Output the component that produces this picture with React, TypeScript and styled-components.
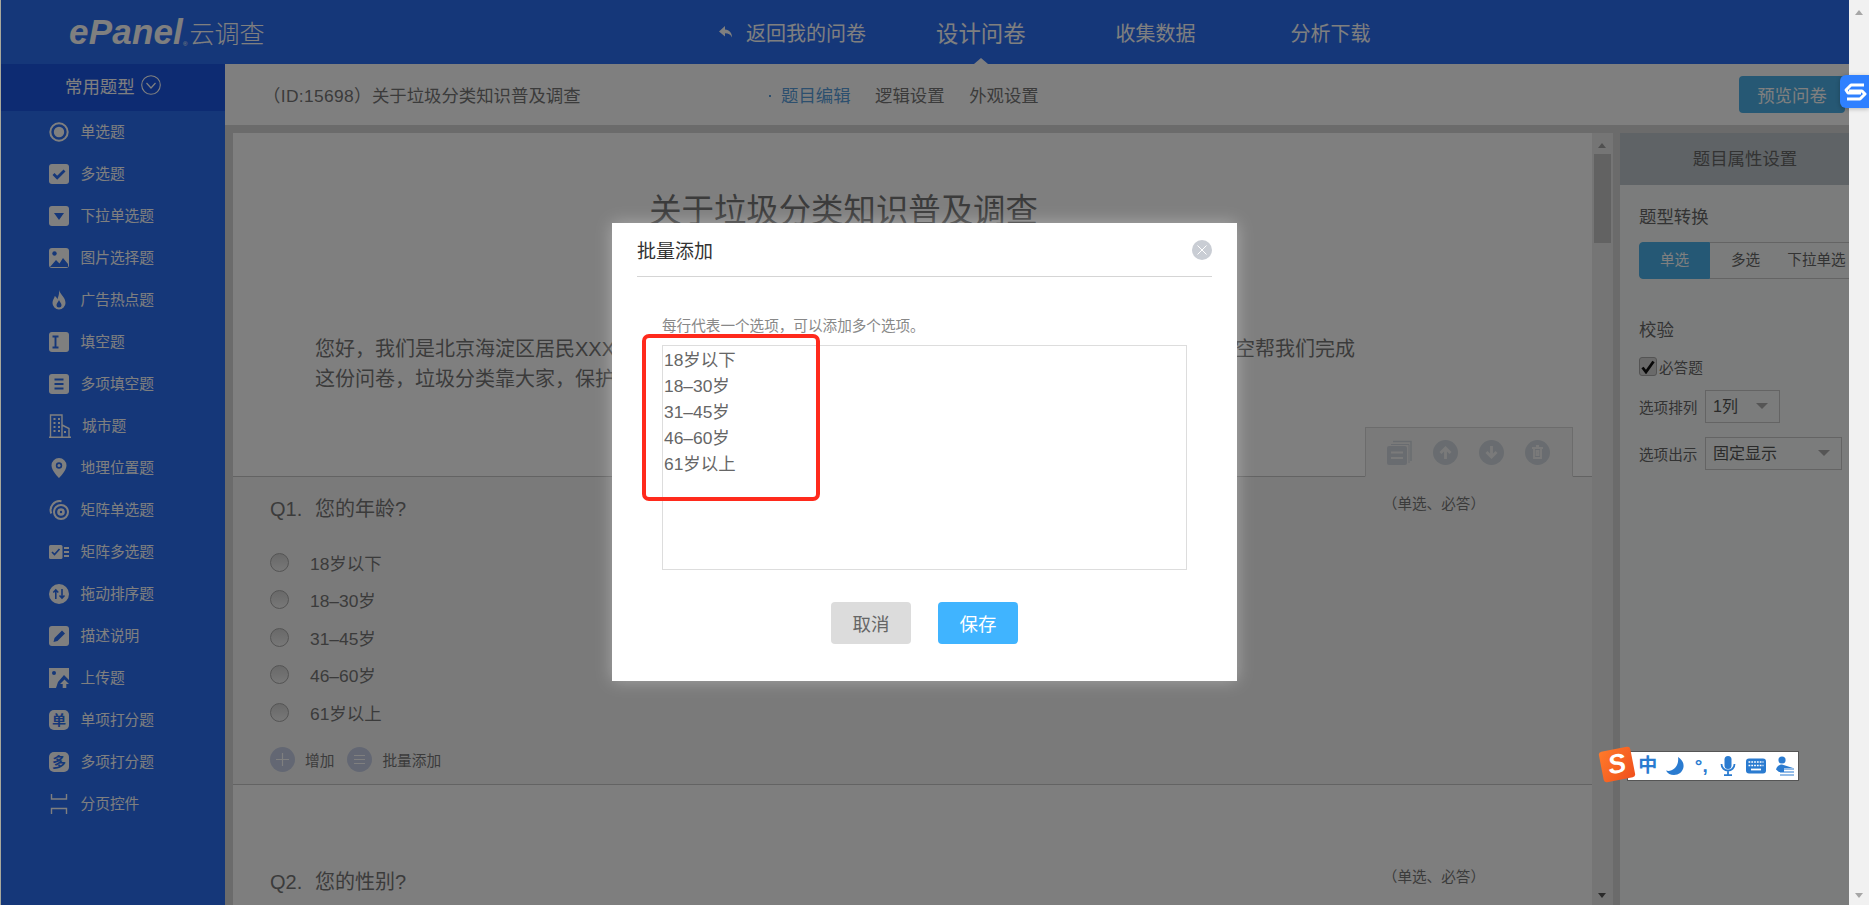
import React from "react";
import styled, { createGlobalStyle } from "styled-components";

const BLUE = "#2b6ef2";
const FONT = `"Liberation Sans", "Noto Sans CJK SC", sans-serif`;

const GlobalStyle = createGlobalStyle`
	* {
		box-sizing: border-box;
	}

	html,
	body {
		margin: 0;
		height: 100%;
		overflow: hidden;
		font-family: ${FONT};
	}
`;

const Root = styled.div`
	position: relative;
	display: flex;
	width: 100vw;
	height: 100vh;
	overflow: hidden;
`;

const Edge = styled.div`
	flex: 0 0 1px;
	background: #a8a89c;
`;

const Page = styled.div`
	position: relative;
	flex: 1;
	min-width: 0;
	display: flex;
	flex-direction: column;
	overflow: hidden;
	background: #fff;
`;

const PageScroll = styled.div`
	position: relative;
	flex: 0 0 20px;
	background: #f1f1f1;
`;

const Arrow = styled.span<{ $down?: boolean; $color: string }>`
	position: absolute;
	left: 50%;
	${(p) => (p.$down ? "bottom: 7px;" : "top: 10px;")}
	margin-left: -4.5px;
	border-left: 4.5px solid transparent;
	border-right: 4.5px solid transparent;
	${(p) =>
		p.$down
			? `border-top: 5px solid ${p.$color};`
			: `border-bottom: 5px solid ${p.$color};`}
`;

/* top bar */
const TopBar = styled.header`
	flex: 0 0 64px;
	display: flex;
	align-items: center;
	padding-left: 68px;
	background: ${BLUE};
	color: #fff;
`;

const Logo = styled.div`
	flex: 0 0 650px;
	display: flex;
	align-items: center;
	height: 60px;
`;

const LogoMark = styled.span`
	font-size: 35px;
	font-weight: 700;
	font-style: italic;
	letter-spacing: 0.2px;
	font-family: "Liberation Sans", sans-serif;
`;

const LogoReg = styled.sup`
	font-size: 6px;
	align-self: flex-end;
	margin: 0 2px 15px 0;
`;

const LogoName = styled.span`
	font-size: 25px;
	font-weight: 300;
`;

const NavItem = styled.a<{ $offset: number; $active?: boolean }>`
	position: relative;
	display: flex;
	align-items: center;
	height: 64px;
	margin-left: ${(p) => p.$offset}px;
	font-size: ${(p) => (p.$active ? 22.4 : 20)}px;
	color: #fff;

	${(p) =>
		p.$active &&
		`&::after {
			content: "";
			position: absolute;
			left: 50%;
			bottom: 0;
			margin-left: -7px;
			border-left: 7px solid transparent;
			border-right: 7px solid transparent;
			border-bottom: 6px solid #fff;
		}`}
`;

const ReplyIcon = styled.svg`
	width: 14px;
	height: 14px;
	margin-right: 13px;
	fill: currentColor;
`;

/* layout under the top bar */
const Body = styled.div`
	flex: 1;
	min-height: 0;
	display: flex;
`;

const Sidebar = styled.aside`
	flex: 0 0 224px;
	background: ${BLUE};
	color: #fff;
`;

const SideHead = styled.div`
	display: flex;
	align-items: center;
	height: 47px;
	padding: 0 0 5px 64px;
	gap: 6px;
	background: #1a56e4;
	font-size: 17.4px;
`;

const SideItem = styled.div<{ $city?: boolean }>`
	display: flex;
	align-items: center;
	height: 42px;
	padding-left: 48px;
	font-size: 14.7px;
	gap: ${(p) => (p.$city ? 11 : 11.5)}px;
`;

const SideLabel = styled.span`
	margin-bottom: 3px;
`;

const IconBox = styled.svg<{ $w?: number; $h?: number }>`
	flex: none;
	width: ${(p) => p.$w ?? 20}px;
	height: ${(p) => p.$h ?? 20}px;
	fill: currentColor;
`;

const Main = styled.main`
	flex: 1;
	min-width: 0;
	display: flex;
	flex-direction: column;
`;

const SubBar = styled.div`
	flex: 0 0 61px;
	display: flex;
	align-items: center;
	padding-left: 38px;
	background: #fff;
	font-size: 17.4px;
	color: #777;
`;

const SurveyId = styled.div`
	flex: 0 0 518px;
`;

const SurveyCode = styled.span`
	letter-spacing: 0.35px;
`;

const Tabs = styled.nav`
	display: flex;
	gap: 24.5px;
`;

const Tab = styled.a<{ $active?: boolean }>`
	position: relative;
	color: ${(p) => (p.$active ? "#5a9fdc" : "#777")};

	${(p) =>
		p.$active &&
		`&::before {
			content: "";
			position: absolute;
			left: -12px;
			top: 50%;
			width: 2px;
			height: 2px;
			background: #5a9fdc;
		}`}
`;

const PreviewButton = styled.button`
	margin-left: auto;
	margin-right: 4px;
	width: 106px;
	height: 37px;
	border: 0;
	border-radius: 4px;
	background: #4cb0e8;
	color: #fff;
	font: 17.4px ${FONT};
`;

const Workspace = styled.div`
	flex: 1;
	min-height: 0;
	display: flex;
	padding: 8px 0 0 8px;
	background: #d6d6d6;
`;

const Canvas = styled.div`
	flex: 0 0 1359px;
	overflow: hidden;
	background: #fff;
	color: #777;
`;

const Intro = styled.section`
	display: flex;
	flex-direction: column;
	height: 344px;
	padding-top: 56px;
	border-bottom: 1px solid #c6c6c6;
`;

const SurveyTitle = styled.h1`
	margin: 0;
	padding-right: 138px;
	font-size: 32.4px;
	font-weight: 400;
	line-height: 44px;
	text-align: center;
`;

const IntroText = styled.p`
	margin: 101px 0 0 82px;
	font-size: 20px;
	line-height: 30px;
	white-space: nowrap;
`;

const ActionTab = styled.div`
	display: flex;
	align-items: center;
	gap: 21px;
	align-self: flex-end;
	width: 208px;
	height: 50px;
	margin: auto 19px -1px 0;
	padding-left: 21px;
	border: 1px solid #d8d8d8;
	border-bottom-color: #f5f5f5;
	background: #f5f5f5;
	color: #d2d9e0;
`;

const Question = styled.section<{ $plain?: boolean }>`
	padding: ${(p) => (p.$plain ? "81.5px" : "17px")} 0 12px 37px;
	background: ${(p) => (p.$plain ? "#fcfcfc" : "#f5f5f5")};
	border-bottom: 1px solid #c6c6c6;
`;

const QuestionHead = styled.div`
	display: flex;
	justify-content: space-between;
	padding-right: 107px;
	height: 30px;
`;

const QuestionTitle = styled.div`
	font-size: 20px;
	line-height: 30px;
`;

const QuestionNo = styled.span`
	display: inline-block;
	width: 45px;
`;

const QuestionKind = styled.span`
	font-size: 14.6px;
	line-height: 20px;
`;

const OptionList = styled.div`
	margin-top: 19.5px;
`;

const OptionRow = styled.div`
	display: flex;
	align-items: center;
	height: 37.5px;
	font-size: 17.4px;
	gap: 21px;
`;

const Radio = styled.span`
	width: 19px;
	height: 19px;
	border-radius: 50%;
	border: 1px solid #a8a8a8;
	background: linear-gradient(#d2d2d2, #f0f0f0);
`;

const OptionTools = styled.div`
	display: flex;
	align-items: center;
	height: 25px;
	margin-top: 16px;
	font-size: 14.7px;
`;

const ToolCircle = styled.svg<{ $gap: number }>`
	width: 25px;
	height: 25px;
	margin-right: 10px;
	margin-left: ${(p) => p.$gap}px;
`;

const CanvasScroll = styled.div`
	position: relative;
	flex: 0 0 21px;
	background: #ebebeb;
`;

const ScrollThumb = styled.div`
	position: absolute;
	left: 2px;
	right: 2px;
	top: 21px;
	height: 89px;
	background: #c4c4c4;
`;

const Panel = styled.aside`
	flex: 0 0 229px;
	margin-left: 7px;
	overflow: hidden;
	background: #f6f9f8;
	color: #666;
	font-size: 14.6px;
`;

const PanelHead = styled.div`
	height: 52px;
	padding-left: 21px;
	line-height: 52px;
	text-align: center;
	background: #bec6cc;
	font-size: 17.4px;
`;

const PanelBody = styled.div`
	padding-left: 19px;
`;

const PanelTitle = styled.div<{ $top: number }>`
	margin-top: ${(p) => p.$top}px;
	font-size: 17.4px;
	line-height: 24px;
`;

const Segments = styled.div`
	display: flex;
	width: 213px;
	height: 37px;
	margin-top: 13px;
`;

const Segment = styled.div<{ $active?: boolean }>`
	flex: 0 0 71px;
	line-height: 35px;
	text-align: center;
	white-space: nowrap;
	border: 1px solid ${(p) => (p.$active ? "#4cb0e8" : "#c8c8c8")};
	border-width: 1px ${(p) => (p.$active ? "1px 1px 1px" : "0 1px 0")};
	background: ${(p) => (p.$active ? "#4ab0ea" : "transparent")};
	color: ${(p) => (p.$active ? "#fff" : "#666")};
	border-radius: ${(p) => (p.$active ? "4px 0 0 4px" : "0")};
`;

const CheckRow = styled.label`
	display: flex;
	align-items: center;
	gap: 2px;
	height: 19px;
	margin-top: 15px;
`;

const CheckBox = styled.span`
	display: flex;
	align-items: center;
	justify-content: center;
	width: 18px;
	height: 19px;
	border: 1px solid #a8a8a8;
	border-radius: 3px;
	background: #d4d4d4;
`;

const FieldRow = styled.div`
	display: flex;
	align-items: center;
	margin-top: 14px;
`;

const FieldLabel = styled.span`
	flex: 0 0 66px;
`;

const Select = styled.div<{ $w: number }>`
	position: relative;
	width: ${(p) => p.$w}px;
	height: 33px;
	line-height: 32px;
	padding-left: 7px;
	border: 1px solid #c8c8c8;
	color: #555;
	font-size: 16px;

	&::after {
		content: "";
		position: absolute;
		right: 11px;
		top: 12px;
		border-left: 6px solid transparent;
		border-right: 6px solid transparent;
		border-top: 6px solid #aaa;
	}
`;

/* dialog */
const Overlay = styled.div`
	position: absolute;
	inset: 0;
	display: flex;
	align-items: center;
	justify-content: center;
	padding: 0 1px 1px 0;
	background: rgba(0, 0, 0, 0.5);
`;

const Modal = styled.div`
	position: relative;
	width: 625px;
	height: 458px;
	background: #fff;
	box-shadow: 0 0 16px rgba(255, 255, 255, 0.35);
`;

const ModalHead = styled.div`
	display: flex;
	align-items: center;
	justify-content: space-between;
	height: 54px;
	margin: 0 25px;
	border-bottom: 1px solid #d5d5d5;
`;

const ModalTitle = styled.h2`
	margin: 0;
	font-size: 19px;
	font-weight: 400;
	color: #333;
`;

const CloseIcon = styled.svg`
	width: 20px;
	height: 20px;
`;

const ModalBody = styled.div`
	padding: 39px 50px 0;
`;

const Hint = styled.div`
	font-size: 14.6px;
	line-height: 20px;
	color: #888;
`;

const BulkInput = styled.textarea`
	display: block;
	width: 525px;
	height: 225px;
	margin-top: 9px;
	padding: 1px 1px 0;
	border: 1px solid #ddd;
	outline: none;
	resize: none;
	overflow: hidden;
	font: 17.4px/26px ${FONT};
	color: #666;
`;

const ModalActions = styled.div`
	display: flex;
	justify-content: center;
	gap: 27px;
	margin-top: 32px;
`;

const ModalButton = styled.button<{ $primary?: boolean }>`
	width: 80px;
	height: 42px;
	border: 0;
	border-radius: 4px;
	background: ${(p) => (p.$primary ? "#40b4ff" : "#dcdcdc")};
	color: ${(p) => (p.$primary ? "#fff" : "#666")};
	font: 18.5px ${FONT};
`;

const Annotation = styled.div`
	position: absolute;
	left: 30px;
	top: 111px;
	width: 178px;
	height: 167px;
	border: 4px solid #ff2a1c;
	border-radius: 7px;
`;

/* floating browser and input method widgets */
const SideWidget = styled.div`
	position: absolute;
	right: 0;
	top: 75px;
	display: flex;
	align-items: center;
	justify-content: center;
	width: 29px;
	height: 33px;
	border-radius: 6px 0 0 6px;
	background: #2f80ff;
	box-shadow: 0 1px 4px rgba(0, 0, 0, 0.25);
`;

const ImeBar = styled.div`
	position: absolute;
	left: 1626px;
	top: 751px;
	display: flex;
	align-items: center;
	width: 172px;
	height: 30px;
	padding-left: 7px;
	border: 1px solid #555;
	background: #fff;
	color: #2a7bd0;
`;

const ImeBadge = styled.span`
	position: absolute;
	left: -27px;
	top: -3px;
	display: flex;
	align-items: center;
	justify-content: center;
	width: 32px;
	height: 31px;
	border-radius: 3px;
	transform: rotate(-11deg);
	background: linear-gradient(135deg, #ff7a2a, #f0501c);
	color: #fff;
	font: italic 700 27px "Liberation Sans", sans-serif;
`;

const ImeGlyph = styled.span`
	width: 28px;
	text-align: center;
	font-size: 19px;
	font-weight: 700;
	line-height: 24px;
`;

const ImeIcon = styled.svg<{ $w?: number }>`
	flex: none;
	width: ${(p) => p.$w ?? 20}px;
	height: 20px;
	margin: 0 ${(p) => (p.$w ? 28 - p.$w : 8) / 2}px;
	fill: currentColor;
`;

const ic = (children: React.ReactNode, w?: number, h?: number) => (
	<IconBox viewBox={`0 0 ${w ?? 20} ${h ?? 20}`} $w={w} $h={h}>
		{children}
	</IconBox>
);

const Sq = () => <rect width="20" height="20" rx="3" />;

const Cut: React.FC<{ d: string; w?: number }> = ({ d, w = 2.4 }) => (
	<path d={d} fill="none" stroke={BLUE} strokeWidth={w} />
);

const questionTypes: { label: string; icon: React.ReactNode; city?: boolean }[] = [
	{
		label: "单选题",
		icon: ic(
			<>
				<circle cx="10" cy="10" r="8.7" fill="none" stroke="currentColor" strokeWidth="2" />
				<circle cx="10" cy="10" r="5.2" />
			</>,
		),
	},
	{
		label: "多选题",
		icon: ic(
			<>
				<Sq />
				<Cut d="M4.5 10l3.700 3.700L15.500 6.500" w={2.8} />
			</>,
		),
	},
	{
		label: "下拉单选题",
		icon: ic(
			<>
				<Sq />
				<path d="M5 7h10l-5 7z" fill={BLUE} />
			</>,
		),
	},
	{
		label: "图片选择题",
		icon: ic(
			<>
				<Sq />
				<circle cx="5.500" cy="5.500" r="2.200" fill={BLUE} />
				<path d="M1 19l6-7 3.500 3.500L14 10l5 6v3z" fill={BLUE} />
			</>,
		),
	},
	{
		label: "广告热点题",
		icon: ic(
			<>
				<path d="M10 0c1 4.500 6.500 7 6.500 13a6.500 6.500 0 0 1-13 0c0-3 1.800-4.500 2.300-7 1.500 1 2 2 2.500 3.200C9.400 7 10.500 3.500 10 0z" />
				<path d="M10 10c.5 2 2.500 3.200 2.500 5a2.500 2.500 0 0 1-5 0c0-1.800 2-3 2.500-5z" fill={BLUE} />
			</>,
		),
	},
	{
		label: "填空题",
		icon: ic(
			<>
				<Sq />
				<Cut d="M3.500 4.500h6M6.500 4.500v11M3.500 15.500h6" w={1.900} />
			</>,
		),
	},
	{
		label: "多项填空题",
		icon: ic(
			<>
				<Sq />
				<Cut d="M5.500 5.500h9M5.500 10h9M5.500 14.500h9" w={2} />
			</>,
		),
	},
	{
		label: "城市题",
		city: true,
		icon: ic(
			<g fill="none" stroke="currentColor" strokeWidth="1.400">
				<path d="M1.500 23V1h11.500v22M13 11l7 3.500V23M0 23.300h22" />
				<path d="M4.500 5h2M9 5h2M4.500 9h2M9 9h2M4.500 13h2M9 13h2M4.500 17h2M9 17h2M16 17v2" strokeWidth="2" />
			</g>,
			22,
			24,
		),
	},
	{
		label: "地理位置题",
		icon: ic(
			<>
				<path d="M10 0a7.500 7.500 0 0 0-7.500 7.500C2.500 13 10 20 10 20s7.500-7 7.500-12.500A7.500 7.500 0 0 0 10 0z" />
				<circle cx="10" cy="7.500" r="3.200" fill={BLUE} />
				<circle cx="10" cy="7.500" r="1.500" />
			</>,
		),
	},
	{
		label: "矩阵单选题",
		icon: ic(
			<g fill="none" stroke="currentColor" strokeWidth="2">
				<circle cx="12" cy="12" r="7" />
				<circle cx="12" cy="12" r="2.500" strokeWidth="2.600" />
				<path d="M2.300 13.500A9 9 0 0 1 12.500 1.300" />
			</g>,
		),
	},
	{
		label: "矩阵多选题",
		icon: ic(
			<>
				<rect y="3" width="13.500" height="14" rx="1.500" />
				<Cut d="M3 10l2.500 2.500L10.500 7" w={1.700} />
				<path d="M15 5h5v2h-5zM15 9h5v2h-5zM15 13h5v2h-5z" />
			</>,
		),
	},
	{
		label: "拖动排序题",
		icon: ic(
			<>
				<circle cx="10" cy="10" r="10" />
				<Cut d="M6.800 15V6M4.300 8.500l2.500-2.500 2.500 2.500M13 5v9M10.500 11.500L13 14l2.500-2.500" w={1.600} />
			</>,
		),
	},
	{
		label: "描述说明",
		icon: ic(
			<>
				<Sq />
				<path d="M4.500 16l1-4L13 4.500l3 3L8.500 15z" fill={BLUE} />
			</>,
		),
	},
	{
		label: "上传题",
		icon: ic(
			<>
				<path d="M0 0h20v12l-5-5-6 7H0z" />
				<path d="M0 14h9l-2 6H0z" />
				<circle cx="5" cy="5" r="2" fill={BLUE} />
				<path d="M15.500 11.500l4.500 4.500h-2.700v4h-3.600v-4H11z" />
			</>,
		),
	},
	{
		label: "单项打分题",
		icon: ic(
			<>
				<rect width="20" height="20" rx="5" />
				<text x="10" y="15" textAnchor="middle" fontSize="14" fontWeight="700" fill={BLUE}>
					单
				</text>
			</>,
		),
	},
	{
		label: "多项打分题",
		icon: ic(
			<>
				<rect width="20" height="20" rx="5" />
				<text x="10" y="15" textAnchor="middle" fontSize="14" fontWeight="700" fill={BLUE}>
					多
				</text>
			</>,
		),
	},
	{
		label: "分页控件",
		icon: ic(
			<path
				d="M2.500 0v5h15V0M2.500 20v-5.500h15V20"
				fill="none"
				stroke="currentColor"
				strokeWidth="1.400"
			/>,
		),
	},
];

const options = ["18岁以下", "18–30岁", "31–45岁", "46–60岁", "61岁以上"];

const CirclePath: React.FC<{ d: string; w?: number }> = ({ d, w = 2.8 }) => (
	<svg width="25" height="25" viewBox="0 0 25 25">
		<circle cx="12.500" cy="12.500" r="12.500" fill="currentColor" />
		<path d={d} fill="none" stroke="#f5f5f5" strokeWidth={w} />
	</svg>
);

const App: React.FC = () => {
	return (
		<Root>
			<GlobalStyle />
			<Edge />
			<Page>
				<TopBar>
					<Logo>
						<LogoMark>ePanel</LogoMark>
						<LogoReg>®</LogoReg>
						<LogoName>云调查</LogoName>
					</Logo>
					<NavItem $offset={0}>
						<ReplyIcon viewBox="0 0 14 14">
							<path d="M6 1L0 6.500 6 11.500V8.300c3.500 0 5.500 1.200 7 4.200C13 8 10.500 5 6 4.600z" />
						</ReplyIcon>
						返回我的问卷
					</NavItem>
					<NavItem $offset={70} $active>
						设计问卷
					</NavItem>
					<NavItem $offset={90}>收集数据</NavItem>
					<NavItem $offset={95}>分析下载</NavItem>
				</TopBar>
				<Body>
					<Sidebar>
						<SideHead>
							常用题型
							<svg width="20" height="20" viewBox="0 0 20 20" fill="none" stroke="#fff">
								<circle cx="10" cy="10" r="9.300" strokeWidth="1.100" />
								<path d="M5.500 8l4.500 5 4.500-5" strokeWidth="1.200" />
							</svg>
						</SideHead>
						{questionTypes.map((t) => (
							<SideItem key={t.label} $city={t.city}>
								{t.icon}
								<SideLabel>{t.label}</SideLabel>
							</SideItem>
						))}
					</Sidebar>
					<Main>
						<SubBar>
							<SurveyId>
								<SurveyCode>（ID:15698）</SurveyCode>关于垃圾分类知识普及调查
							</SurveyId>
							<Tabs>
								<Tab $active>题目编辑</Tab>
								<Tab>逻辑设置</Tab>
								<Tab>外观设置</Tab>
							</Tabs>
							<PreviewButton>预览问卷</PreviewButton>
						</SubBar>
						<Workspace>
							<Canvas>
								<Intro>
									<SurveyTitle>关于垃圾分类知识普及调查</SurveyTitle>
									<IntroText>
										您好，我们是北京海淀区居民XXX，我们正在进行一项关于垃圾分类知识普及的问卷调查，想请您百忙抽空帮我们完成
										<br />
										这份问卷，垃圾分类靠大家，保护环境靠你我。
									</IntroText>
									<ActionTab>
										<svg width="25" height="25" viewBox="0 0 25 25" fill="currentColor">
											<path d="M6 1.500h18V21" fill="none" stroke="currentColor" strokeWidth="1.500" />
											<path d="M4 4.500h18V23" fill="none" stroke="currentColor" strokeWidth="1" />
											<rect y="6" width="20" height="19" rx="2" />
											<path d="M4 12.500h12M4 18h12" stroke="#f5f5f5" strokeWidth="2" />
										</svg>
										<CirclePath d="M12.500 19v-11M7.500 13l5-5 5 5" />
										<CirclePath d="M12.500 6v11M7.500 12l5 5 5-5" />
										<CirclePath d="M7 8h11M9 8v10h7V8M11 6h3M11.500 11v4h2v-4z" w={1.800} />
									</ActionTab>
								</Intro>
								<Question>
									<QuestionHead>
										<QuestionTitle>
											<QuestionNo>Q1.</QuestionNo>您的年龄?
										</QuestionTitle>
										<QuestionKind>（单选、必答）</QuestionKind>
									</QuestionHead>
									<OptionList>
										{options.map((o) => (
											<OptionRow key={o}>
												<Radio />
												{o}
											</OptionRow>
										))}
									</OptionList>
									<OptionTools>
										<ToolCircle $gap={0} viewBox="0 0 25 25">
											<circle cx="12.500" cy="12.500" r="12.500" fill="#c6cfe6" />
											<path d="M12.500 6v13M6 12.500h13" stroke="#fff" strokeWidth="1.200" />
										</ToolCircle>
										增加
										<ToolCircle $gap={13} viewBox="0 0 25 25">
											<circle cx="12.500" cy="12.500" r="12.500" fill="#c6cfe6" />
											<path d="M7 8.500h11M7 12.500h11M7 16.500h11" stroke="#fff" strokeWidth="1.200" />
										</ToolCircle>
										批量添加
									</OptionTools>
								</Question>
								<Question $plain>
									<QuestionHead>
										<QuestionTitle>
											<QuestionNo>Q2.</QuestionNo>您的性别?
										</QuestionTitle>
										<QuestionKind>（单选、必答）</QuestionKind>
									</QuestionHead>
								</Question>
							</Canvas>
							<CanvasScroll>
								<Arrow $color="#a0a0a0" />
								<ScrollThumb />
								<Arrow $down $color="#555" />
							</CanvasScroll>
							<Panel>
								<PanelHead>题目属性设置</PanelHead>
								<PanelBody>
									<PanelTitle $top={20}>题型转换</PanelTitle>
									<Segments>
										<Segment $active>单选</Segment>
										<Segment>多选</Segment>
										<Segment>下拉单选</Segment>
									</Segments>
									<PanelTitle $top={39}>校验</PanelTitle>
									<CheckRow>
										<CheckBox>
											<svg width="14" height="14" viewBox="0 0 14 14">
												<path d="M1.500 7.500l3.500 4.500L12.500 1.500" fill="none" stroke="#111" strokeWidth="2.800" />
											</svg>
										</CheckBox>
										必答题
									</CheckRow>
									<FieldRow>
										<FieldLabel>选项排列</FieldLabel>
										<Select $w={75}>1列</Select>
									</FieldRow>
									<FieldRow>
										<FieldLabel>选项出示</FieldLabel>
										<Select $w={137}>固定显示</Select>
									</FieldRow>
								</PanelBody>
							</Panel>
						</Workspace>
					</Main>
				</Body>
				<Overlay>
					<Modal>
						<ModalHead>
							<ModalTitle>批量添加</ModalTitle>
							<CloseIcon viewBox="0 0 20 20">
								<circle cx="10" cy="10" r="10" fill="#c9cdd4" />
								<path d="M5.500 5.500l9 9M14.500 5.500l-9 9" stroke="#fff" strokeWidth="1" />
							</CloseIcon>
						</ModalHead>
						<ModalBody>
							<Hint>每行代表一个选项，可以添加多个选项。</Hint>
							<BulkInput readOnly defaultValue={options.join("\n")} />
							<ModalActions>
								<ModalButton>取消</ModalButton>
								<ModalButton $primary>保存</ModalButton>
							</ModalActions>
						</ModalBody>
						<Annotation />
					</Modal>
				</Overlay>
				<ImeBar>
					<ImeBadge>S</ImeBadge>
					<ImeGlyph>中</ImeGlyph>
					<ImeIcon viewBox="0 0 20 20">
						<path d="M13 1c4 2.500 6 6 5.500 10-.7 5-5 8-9.500 8-3.500 0-6.500-1.500-8-4.500 6 2 13.500-4 12-13.500z" />
					</ImeIcon>
					<ImeGlyph>°,</ImeGlyph>
					<ImeIcon viewBox="0 0 20 20">
						<rect x="6.500" y="0" width="7" height="13" rx="3.500" />
						<path d="M3.500 8c0 4 3 6.500 6.500 6.500S16.500 12 16.500 8M10 14.500V19M6 19.200h8" fill="none" stroke="currentColor" strokeWidth="1.800" />
					</ImeIcon>
					<ImeIcon viewBox="0 0 20 20" $w={22}>
						<rect x="0" y="2.500" width="20" height="15" rx="3" />
						<path d="M2.500 6h15M2.500 9.500h15" stroke="#fff" strokeWidth="1.600" strokeDasharray="1.800 1" fill="none" />
						<path d="M5 13.500h10" stroke="#fff" strokeWidth="1.800" fill="none" />
					</ImeIcon>
					<ImeIcon viewBox="0 0 20 20" $w={22}>
						<circle cx="8" cy="4" r="3.600" />
						<path d="M8 8.500c-3 0-5 2-6 5l3 2.500h5v-4h9" />
						<path d="M6 13h14M6 16h14M6 19h14" stroke="currentColor" strokeWidth="1" fill="none" />
					</ImeIcon>
				</ImeBar>
			</Page>
			<PageScroll>
				<Arrow $color="#a6a6a6" />
				<Arrow $down $color="#a6a6a6" />
			</PageScroll>
			<SideWidget>
				<svg width="24" height="20" viewBox="0 0 24 20" fill="none" stroke="#fff" strokeWidth="3" strokeLinejoin="round">
					<path d="M21 3H8L3 8l2 3h13" />
					<path d="M6 9h13l3 3-5 5H4" />
				</svg>
			</SideWidget>
		</Root>
	);
};

export default App;
